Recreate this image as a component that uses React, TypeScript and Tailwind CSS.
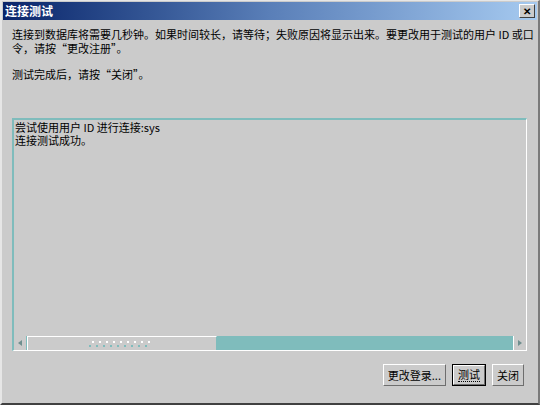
import React from 'react';

const font = { fontFamily: '"Noto Sans CJK SC", "Liberation Sans", sans-serif' };

function Btn({ label, isDefault }: { label: string; isDefault?: boolean }) {
  return (
    <div className={`h-[22px] ${isDefault ? 'border border-black' : ''}`}>
      <div className="h-full border-t border-l border-white border-r border-b border-r-[#6e6e6e] border-b-[#6e6e6e] px-[4px] flex items-center text-[11px] text-black bg-[#cbcbcb]">
        <span className={isDefault ? 'border-b border-dotted border-black leading-[13px]' : 'leading-[13px]'}>{label}</span>
      </div>
    </div>
  );
}

export default function App() {
  return (
    <div className="w-[540px] h-[405px] overflow-hidden bg-[#cbcbcb] border-l-2 border-t border-l-[#e6e6e6] border-t-[#e6e6e6] border-r-2 border-b-2 border-r-[#7a7a7a] border-b-[#404040] flex flex-col text-black" style={font}>
      {/* タイトルバー */}
      <div className="mx-[1px] mt-[1px] h-[18px] shrink-0 bg-gradient-to-r from-[#0a246a] via-[#5a7fb8] to-[#a6caf0] flex items-center justify-between pl-[2px] pr-[2px]">
        <span className="text-white font-bold text-[12px] leading-none">连接测试</span>
        <div className="w-[16px] h-[14px] bg-[#cbcbcb] border-t border-l border-white border-r border-b border-r-[#404040] border-b-[#404040] flex items-center justify-center text-[10px] font-bold leading-none">✕</div>
      </div>

      {/* 説明文 */}
      <div className="pl-[10px] pt-[7px] text-[11px] leading-[14px] whitespace-nowrap shrink-0">
        <p className="h-[14px]">连接到数据库将需要几秒钟。如果时间较长，请等待；失败原因将显示出来。要更改用于测试的用户 ID 或口</p>
        <p className="h-[14px]">令，请按“更改注册”。</p>
        <p className="h-[14px] mt-[12px]">测试完成后，请按“关闭”。</p>
      </div>

      {/* 結果エリア */}
      <div className="ml-[10px] mr-[11px] mt-[37px] h-[233px] shrink-0 border-t-2 border-l-2 border-[#7fbcbc] border-r border-b border-r-white border-b-white flex flex-col">
        <div className="flex-1 pl-[1px] pt-[1px] text-[11px] leading-[13px] whitespace-nowrap">
          <p className="h-[13px]">尝试使用用户 ID 进行连接:sys</p>
          <p className="h-[13px]">连接测试成功。</p>
        </div>
        <div className="h-[14px] flex bg-[#7fbcbc]">
          <div className="w-[13px] h-full bg-[#cbcbcb] border-r border-[#7fbcbc] flex items-center justify-center">
            <svg width="4" height="6" viewBox="0 0 4 6"><path d="M4 0 L0 3 L4 6 Z" fill="#6f8f8f" /></svg>
          </div>
          <div className="w-[190px] h-full bg-[#cbcbcb] border-t border-l border-white border-r border-r-[#7fbcbc] flex items-center justify-center">
            <svg width="66" height="6" viewBox="0 0 66 6">
              {[0, 7, 14, 21, 28, 35, 42, 49, 56].map((x) => (
                <g key={x}>
                  <rect x={x + 3} y={0} width={2} height={2} fill="#ffffff" />
                  <rect x={x} y={4} width={2} height={2} fill="#7fbcbc" />
                </g>
              ))}
            </svg>
          </div>
          <div className="flex-1" />
          <div className="w-[13px] h-full bg-[#cbcbcb] border-l border-white flex items-center justify-center">
            <svg width="4" height="6" viewBox="0 0 4 6"><path d="M0 0 L4 3 L0 6 Z" fill="#6f8f8f" /></svg>
          </div>
        </div>
      </div>

      {/* ボタン */}
      <div className="flex justify-end gap-[6px] mr-[14px] mt-[13px] shrink-0">
        <Btn label="更改登录..." />
        <Btn label="测试" isDefault />
        <Btn label="关闭" />
      </div>
    </div>
  );
}
